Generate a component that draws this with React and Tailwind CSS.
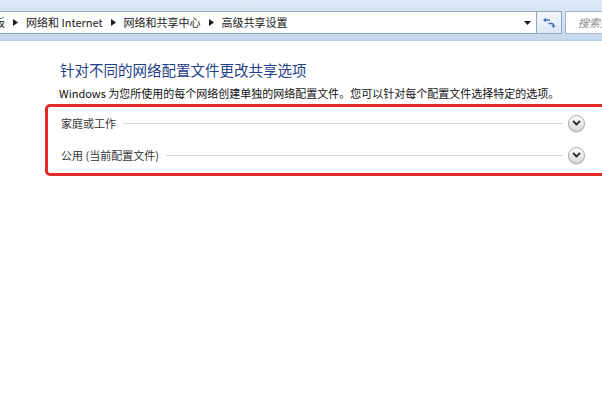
// App.jsx — 高级共享设置 (Windows 7 control panel)
const Crumb = () => (
  <svg width="5" height="7" viewBox="0 0 5 7" className="shrink-0">
    <polygon points="0,0 5,3.5 0,7" fill="#1a1a1a" />
  </svg>
);

const Chevron = () => (
  <span className="w-[17px] h-[17px] shrink-0 rounded-full border border-[#a9a9a9] bg-gradient-to-b from-[#ffffff] to-[#d9d9d9] flex items-center justify-center shadow-[0_1px_1px_rgba(0,0,0,0.15)]">
    <svg width="9" height="6" viewBox="0 0 9 6">
      <path d="M1 1 L4.5 4.5 L8 1" fill="none" stroke="#2b2b2b" strokeWidth="1.8" />
    </svg>
  </span>
);

const ProfileRow = ({ label }) => (
  <div className="h-[32px] flex items-center pl-[13px] pr-[24px]">
    <span className="text-[11px] text-[#333] whitespace-nowrap">{label}</span>
    <div className="flex-1 h-px bg-[#d6d6d6] ml-[7px] mr-[5px]" />
    <Chevron />
  </div>
);

export default function App() {
  return (
    <div
      className="w-[602px] h-[400px] bg-white overflow-hidden"
      style={{ fontFamily: "'Noto Sans CJK SC', 'Noto Sans', sans-serif" }}
    >
      {/* Address bar */}
      <div className="h-[41px] bg-gradient-to-b from-[#dfe9f6] to-[#c6d7eb] pt-[11px] flex items-start border-b border-[#b9cbe2]">
        <div className="w-[537px] h-[23px] bg-white border border-l-0 border-[#8ea6c6] flex items-center overflow-hidden">
          <div className="flex items-center gap-[8px] text-[11px] text-[#1a1a1a] whitespace-nowrap">
            <span className="-ml-[6px]">板</span>
            <Crumb />
            <span>网络和 Internet</span>
            <Crumb />
            <span>网络和共享中心</span>
            <Crumb />
            <span>高级共享设置</span>
          </div>
          <svg width="7" height="4" viewBox="0 0 7 4" className="ml-auto mr-[5px]">
            <polygon points="0,0 7,0 3.5,4" fill="#1a1a1a" />
          </svg>
        </div>
        <div className="w-[25px] h-[23px] border border-l-0 border-[#8ea6c6] bg-gradient-to-b from-[#f4f8fc] to-[#dde8f4] flex items-center justify-center">
          <svg width="13" height="11" viewBox="0 0 13 11">
            <path d="M2.5 3 H7" fill="none" stroke="#3b6fb6" strokeWidth="1.4" />
            <polygon points="0,3 3,0.8 3,5.2" fill="#3b6fb6" />
            <path d="M5.5 6.5 H8.5 Q10.5 6.5 10.5 8.5 V9" fill="none" stroke="#3b6fb6" strokeWidth="1.4" />
            <polygon points="8.3,8.5 12.7,8.5 10.5,11" fill="#3b6fb6" />
          </svg>
        </div>
        <div className="ml-[3px] flex-1 h-[23px] border border-r-0 border-[#a7b9d1] bg-white flex items-center pl-[12px] overflow-hidden">
          <span className="text-[11px] italic text-[#8d8d8d] whitespace-nowrap">搜索控制面板</span>
        </div>
      </div>

      {/* Content */}
      <div className="pl-[45px] pt-[19px]">
        <h1 className="pl-[15px] text-[14.5px] leading-[20px] text-[#1f3f8c] whitespace-nowrap">
          针对不同的网络配置文件更改共享选项
        </h1>
        <p className="pl-[14px] mt-[5px] text-[11px] leading-[16px] text-[#111] whitespace-nowrap">
          Windows 为您所使用的每个网络创建单独的网络配置文件。您可以针对每个配置文件选择特定的选项。
        </p>

        <div className="mt-[3px] w-[567px] border-[3px] border-[#e12b2b] rounded-[5px] pb-[2px]">
          <ProfileRow label="家庭或工作" />
          <ProfileRow label="公用 (当前配置文件)" />
        </div>
      </div>
    </div>
  );
}
